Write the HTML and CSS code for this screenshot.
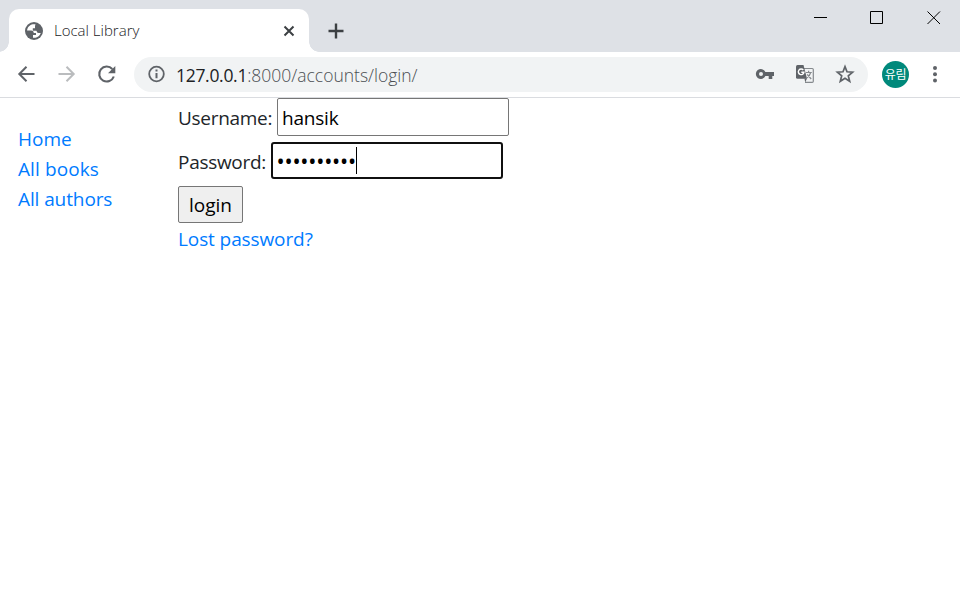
FILE: index.html
```html
<!DOCTYPE html>
<html lang="ko">
<head>
<meta charset="utf-8">
<title>Local Library</title>
<link rel="stylesheet" href="styles.css">
</head>
<body>
<header class="titlebar">
  <div class="tab">
    <svg class="globe" width="20" height="20" viewBox="0 0 20 20"><circle cx="10" cy="10" r="9" fill="#5f6368"/><path d="M11.500 3.300C8 2.500 4 4.500 3.200 8.500L3.100 9.500H7.500Q9.800 9.500 9.800 12H12V14H9V16.700C12.500 17.300 15.800 15 16.700 12H14.500Q12.800 12 12.500 9.800H8.800V7.200H11V5.500Q11 4.500 11.500 3.300Z" fill="#fff"/></svg>
    <span class="tab-title">Local Library</span>
    <svg class="tab-close" width="12" height="12" viewBox="0 0 12 12"><path d="M1.500 1.500 10.500 10.500M10.500 1.500 1.500 10.500" stroke="#3c4043" stroke-width="2"/></svg>
  </div>
  <svg class="new-tab" width="16" height="16" viewBox="0 0 16 16"><path d="M8 .5V15.500M.5 8H15.500" stroke="#3c4043" stroke-width="2.400"/></svg>
  <div class="window-controls">
    <svg width="14" height="14" viewBox="0 0 14 14"><path d="M0 7.500H13" stroke="#000"/></svg>
    <svg width="14" height="14" viewBox="0 0 14 14"><path d="M.5 1.500H12.500V13.500H.5Z" fill="none" stroke="#000"/></svg>
    <svg width="14" height="14" viewBox="0 0 14 14"><path d="M.5 1.500 13 14M13 1.500.5 14" stroke="#000"/></svg>
  </div>
</header>
<nav class="toolbar">
  <svg class="nav-icon" width="20" height="20" viewBox="0 0 20 20"><path d="M18.500 10H4M10.500 2.800 3.300 10 10.500 17.200" fill="none" stroke="#5f6368" stroke-width="2"/></svg>
  <svg class="nav-icon" width="20" height="20" viewBox="0 0 20 20"><path d="M2.500 10H17M10.500 2.800 17.700 10 10.500 17.200" fill="none" stroke="#babcbe" stroke-width="2"/></svg>
  <svg class="nav-icon" width="20" height="20" viewBox="0 0 20 20"><path d="M16.300 5A7.500 7.500 0 1 0 17.800 12.500" fill="none" stroke="#5f6368" stroke-width="2.100"/><path d="M19.300 2V9.300H12Z" fill="#5f6368"/></svg>
  <div class="address">
    <svg class="info" width="18" height="18" viewBox="0 0 18 18"><circle cx="8.500" cy="9" r="7.300" fill="none" stroke="#5f6368" stroke-width="1.800"/><path d="M8.500 4.600V6.500M8.500 8V13.300" stroke="#5f6368" stroke-width="2"/></svg>
    <span class="url"><b>127.0.0.1</b>:8000/accounts/login/</span>
    <svg class="key" width="20" height="12" viewBox="0 0 20 12"><path fill-rule="evenodd" d="M10.400 4H19V8H17.300V11H13.700V8H10.400A5 5 0 1 1 10.400 4ZM6 4A2 2 0 1 0 6 8 2 2 0 1 0 6 4Z" fill="#5f6368"/></svg>
    <svg class="translate" width="18" height="18" viewBox="0 0 18 18"><path d="M8 3.500H16.200Q17.300 3.500 17.300 4.600V16.200Q17.300 17.300 16.200 17.300H9" fill="#f1f3f4" stroke="#85898d" stroke-width="1.200"/><path d="M1.500 0H7.500L11 13.700H1.500Q0 13.700 0 12.200V1.500Q0 0 1.500 0Z" fill="#5f6368"/><path d="M10 7.500H15.800M12.600 5.800V7.500M14.700 7.500Q13.700 11 10.700 13M11.200 9.300 15.200 14" fill="none" stroke="#85898d" stroke-width="1.200"/><path d="M7.300 5A2.800 2.800 0 1 0 7.900 7.300H5.300" fill="none" stroke="#fff" stroke-width="1.400"/><path d="M8.500 13.500H11L9.200 17.500Z" fill="#5f6368"/></svg>
    <svg class="star" width="20" height="20" viewBox="0 0 20 20"><path d="M10 2.600 12 7.800 17.600 8.200 13.300 11.800 14.700 17.300 10 14.300 5.300 17.300 6.700 11.800 2.400 8.200 8 7.800Z" fill="none" stroke="#5f6368" stroke-width="1.700"/></svg>
  </div>
  <div class="avatar">유림</div>
  <svg class="menu" width="6" height="20" viewBox="0 0 6 20"><g fill="#5f6368"><circle cx="3" cy="4" r="2"/><circle cx="3" cy="10.200" r="2"/><circle cx="3" cy="16.400" r="2"/></g></svg>
</nav>
<main class="page">
  <ul class="side">
    <li><a>Home</a></li>
    <li><a class="books">All books</a></li>
    <li><a class="authors">All authors</a></li>
  </ul>
  <form class="login">
    <div class="row"><label class="label-user">Username:</label><div class="field">hansik</div></div>
    <div class="row"><label class="label-pass">Password:</label><div class="field focused"><span class="dots">••••••••••</span><i class="caret"></i></div></div>
    <button type="button">login</button>
    <a class="lost">Lost password?</a>
  </form>
</main>
</body>
</html>
```
FILE: styles.css
```css
* { box-sizing: border-box; }
body {
  margin: 0;
  height: 602px;
  overflow: hidden;
  background: #fff;
  color: #212529;
  font: 400 19px/30px "Open Sans", "Noto Sans CJK KR", sans-serif;
}
svg { display: block; flex: none; }
.titlebar {
  display: flex;
  height: 52px;
  padding-left: 9px;
  background: #dee1e6;
}
.tab {
  position: relative;
  display: flex;
  align-items: center;
  width: 300px;
  height: 43px;
  margin-top: 9px;
  padding: 0 14px 0 15px;
  border-radius: 10px 10px 0 0;
  background: #fff;
}
.tab::before, .tab::after {
  content: "";
  position: absolute;
  bottom: 0;
  width: 10px;
  height: 10px;
}
.tab::before {
  left: -10px;
  background: radial-gradient(circle at 0 0, #dee1e6 9.5px, #fff 10px);
}
.tab::after {
  right: -10px;
  background: radial-gradient(circle at 100% 0, #dee1e6 9.5px, #fff 10px);
}
.tab-title {
  margin: -2px 0 0 10px;
  color: #202124;
  font-size: 15px;
  font-weight: 300;
  white-space: nowrap;
}
.tab-close { margin-left: auto; }
.new-tab { margin: 23px 0 0 19px; }
.window-controls {
  display: flex;
  gap: 42px;
  margin: 10px 19px 0 auto;
}
.window-controls svg:nth-child(3) { margin-left: 1px; }
.toolbar {
  display: flex;
  align-items: center;
  height: 46px;
  padding: 0 22px 1px 16px;
  border-bottom: 1px solid #dadce0;
}
.nav-icon { margin-right: 20px; }
.address {
  display: flex;
  align-items: center;
  width: 734px;
  height: 35px;
  margin-left: -2px;
  padding: 0 13px 0 14px;
  border-radius: 18px;
  background: #f1f3f4;
}
.url {
  margin: 1px 0 0 10px;
  color: #4b4f53;
  font-size: 17.5px;
  font-weight: 300;
}
.url b { color: #202124; font-weight: 400; letter-spacing: -.3px; }
.key { margin-left: auto; }
.translate { margin-left: 21px; }
.star { margin-left: 21px; }
.avatar {
  width: 27px;
  height: 27px;
  margin-left: 14px;
  border-radius: 50%;
  background: #00897b;
  color: #fff;
  font-size: 12px;
  line-height: 27px;
  text-align: center;
  letter-spacing: -.3px;
}
.menu { margin-left: auto; }
.page {
  display: grid;
  grid-template-columns: 160px 1fr;
  padding-left: 18px;
}
.side {
  margin: 26px 0 0;
  padding: 0;
  list-style: none;
}
a { color: #007bff; }
.books { letter-spacing: .1px; }
.authors { letter-spacing: -.1px; }
.row {
  display: flex;
  align-items: center;
  height: 38px;
  margin-bottom: 6px;
}
.row + .row { height: 37px; margin-bottom: 7px; }
.label-user, .label-pass { padding-top: 2px; letter-spacing: -.3px; }
.label-user { width: 99px; }
.label-pass { width: 93px; }
.field {
  display: flex;
  align-items: center;
  width: 232px;
  height: 38px;
  padding: 2px 4px 0;
  border: 1px solid #767676;
  border-radius: 2px;
  color: #000;
  letter-spacing: -.2px;
}
.focused {
  height: 37px;
  padding: 0 3px;
  border: 2px solid #101010;
  border-radius: 3px;
}
.dots { padding: 2px 0 0 1px; font-weight: 600; letter-spacing: .8px; }
.caret { width: 1px; height: 27px; background: #000; }
button {
  display: block;
  width: 65px;
  height: 37px;
  padding: 0;
  border: 1px solid #767676;
  border-radius: 2px;
  background: #efefef;
  color: #000;
  font: inherit;
}
.lost { display: block; padding-top: 1px; letter-spacing: -.1px; }
```
